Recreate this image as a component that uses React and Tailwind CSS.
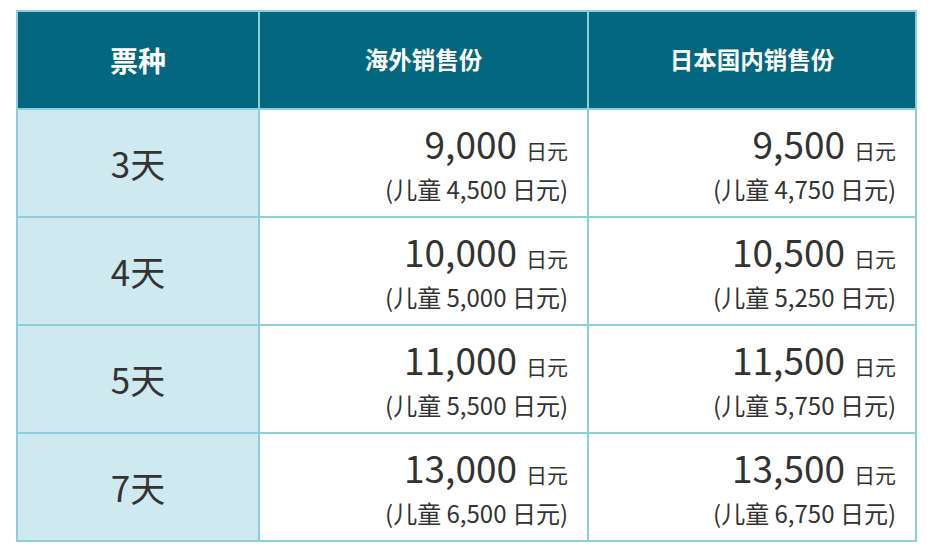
import React from 'react'

const ROWS = [
  { days: '3天', abroad: ['9,000', '4,500'], domestic: ['9,500', '4,750'] },
  { days: '4天', abroad: ['10,000', '5,000'], domestic: ['10,500', '5,250'] },
  { days: '5天', abroad: ['11,000', '5,500'], domestic: ['11,500', '5,750'] },
  { days: '7天', abroad: ['13,000', '6,500'], domestic: ['13,500', '6,750'] },
]

function Price({ adult, child }) {
  return (
    <td className="border-2 border-[#8dcfd9] bg-white pr-[19px] text-right align-middle text-[#333]">
      <div className="leading-[42px]">
        <span className="text-[37px]">{adult}</span>
        <span className="ml-[9px] text-[21px]">日元</span>
      </div>
      <div className="text-[24px] leading-[32px]">(儿童 {child} 日元)</div>
    </td>
  )
}

export default function App() {
  return (
    <div className="min-h-screen bg-white pt-[10px] pl-[16px]" style={{ fontFamily: '"Noto Sans CJK SC", "Noto Sans", sans-serif' }}>
      <table className="w-[899px] table-fixed border-collapse">
        <colgroup>
          <col className="w-[242px]" />
          <col className="w-[329px]" />
          <col className="w-[328px]" />
        </colgroup>
        <thead>
          <tr className="h-[98px] bg-[#02677f] text-white">
            <th className="border-2 border-[#8dcfd9] text-[28px] font-bold">票种</th>
            <th className="border-2 border-[#8dcfd9] text-[23.5px] font-bold">海外销售份</th>
            <th className="border-2 border-[#8dcfd9] text-[23.5px] font-bold">日本国内销售份</th>
          </tr>
        </thead>
        <tbody>
          {ROWS.map(r => (
            <tr key={r.days} className="h-[108px]">
              <td className="border-2 border-[#8dcfd9] bg-[#cfe9f1] text-center text-[35px] text-[#333]">{r.days}</td>
              <Price adult={r.abroad[0]} child={r.abroad[1]} />
              <Price adult={r.domestic[0]} child={r.domestic[1]} />
            </tr>
          ))}
        </tbody>
      </table>
    </div>
  )
}
